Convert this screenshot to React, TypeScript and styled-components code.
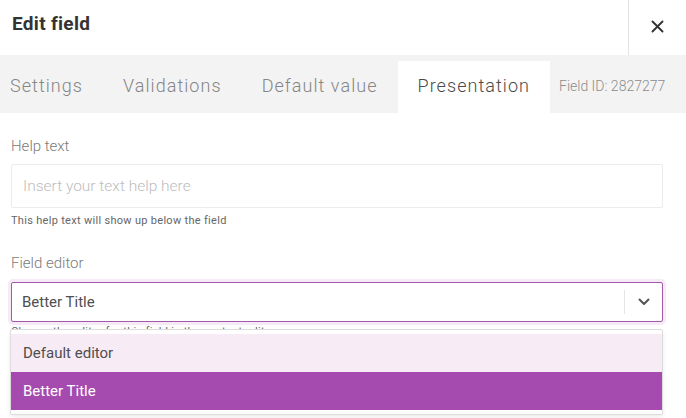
import React from 'react';
import styled, { createGlobalStyle } from 'styled-components';

const GlobalStyle = createGlobalStyle`
  * { box-sizing: border-box; }
  body {
    margin: 0;
    background: #FFFFFF;
    font-family: Roboto, "Liberation Sans", sans-serif;
  }
`;

const Panel = styled.div`
  width: 686px;
  height: 418px;
  display: flex;
  flex-direction: column;
  background: #FFFFFF;
  overflow: hidden;
`;

const Header = styled.header`
  height: 55px;
  display: flex;
  align-items: stretch;
`;

const Title = styled.h1`
  flex: 1;
  margin: 0;
  padding: 13px 0 0 12px;
  font-size: 19px;
  line-height: 22px;
  font-weight: 700;
  letter-spacing: 0.3px;
  color: #333333;
`;

const CloseButton = styled.button`
  width: 58px;
  border: none;
  border-left: 1px solid #E4E4E4;
  background: transparent;
  display: flex;
  align-items: center;
  justify-content: center;
  padding: 0 0 3px;
  cursor: pointer;
`;

const TabBar = styled.nav`
  height: 58px;
  background: #F3F3F3;
  display: flex;
  align-items: flex-end;
`;

const Tab = styled.div<{ $active?: boolean }>`
  height: 52px;
  padding: 14px 20px 0;
  font-size: 18px;
  line-height: 22px;
  font-weight: 300;
  letter-spacing: 1.05px;
  color: ${p => (p.$active ? '#4A4A4A' : '#858585')};
  background: ${p => (p.$active ? '#FFFFFF' : 'transparent')};
  white-space: nowrap;

  &:first-child {
    padding-left: 10px;
  }
`;

const FieldId = styled.div`
  height: 52px;
  padding: 16px 0 0 9px;
  font-size: 14px;
  line-height: 18px;
  font-weight: 300;
  color: #8C8C8C;
  white-space: nowrap;
`;

const Body = styled.div`
  padding: 24px 23px 0 11px;
  display: flex;
  flex-direction: column;
`;

const Label = styled.label`
  display: block;
  font-size: 15px;
  line-height: 18px;
  font-weight: 300;
  color: #7A7A7A;
  margin-bottom: 9px;
`;

const TextInput = styled.input`
  height: 44px;
  width: 100%;
  border: 1px solid #ECECEC;
  border-radius: 2px;
  padding: 0 11px;
  font-family: inherit;
  font-size: 15.5px;
  font-weight: 300;
  color: #555555;
  outline: none;

  &::placeholder {
    color: #BDBDBD;
  }
`;

const Hint = styled.div<{ $gap?: number }>`
  margin-top: ${p => p.$gap ?? 6}px;
  font-size: 11px;
  line-height: 14px;
  letter-spacing: 0.3px;
  color: #666666;
`;

const FieldGroup = styled.div`
  margin-top: 26px;
  position: relative;
`;

const SelectLabel = styled(Label)`
  margin-bottom: 10px;
`;

const SelectWrap = styled.div`
  position: relative;
`;

const SelectControl = styled.div`
  height: 40px;
  border: 1px solid #A05AA8;
  border-radius: 2px;
  box-shadow: 0 0 0 3px #F6EAF6;
  display: flex;
  align-items: center;
  background: #FFFFFF;
`;

const SelectValue = styled.div`
  flex: 1;
  padding-left: 10px;
  font-size: 15px;
  color: #4F4F4F;
`;

const Separator = styled.span`
  width: 1px;
  height: 24px;
  background: #E6E6E6;
`;

const Indicator = styled.div`
  width: 37px;
  display: flex;
  align-items: center;
  justify-content: center;
`;

const Menu = styled.div`
  position: absolute;
  top: 47px;
  left: -1px;
  right: 0;
  padding: 4px 0;
  background: #FFFFFF;
  border: 1px solid #DCDCDC;
  border-radius: 2px;
  box-shadow: 0 2px 4px rgba(0, 0, 0, 0.08);
  z-index: 2;
`;

const Option = styled.div<{ $state: 'hover' | 'selected' }>`
  height: 38px;
  display: flex;
  align-items: center;
  padding-left: 12px;
  font-size: 15px;
  color: ${p => (p.$state === 'selected' ? '#FFFFFF' : '#4F4F4F')};
  background: ${p => (p.$state === 'selected' ? '#A54BAF' : '#F7EBF5')};
`;

const tabs = ['Settings', 'Validations', 'Default value', 'Presentation'];

export default function App() {
  return (
    <>
      <GlobalStyle />
      <Panel>
        <Header>
          <Title>Edit field</Title>
          <CloseButton aria-label="Close">
            <svg width="13" height="13" viewBox="0 0 13 13">
              <path d="M1.5 1.5l10 10M11.5 1.5l-10 10" stroke="#333" strokeWidth="1.9" strokeLinecap="round" />
            </svg>
          </CloseButton>
        </Header>

        <TabBar>
          {tabs.map(t => (
            <Tab key={t} $active={t === 'Presentation'}>{t}</Tab>
          ))}
          <FieldId>Field ID: 2827277</FieldId>
        </TabBar>

        <Body>
          <div>
            <Label>Help text</Label>
            <TextInput placeholder="Insert your text help here" />
            <Hint>This help text will show up below the field</Hint>
          </div>

          <FieldGroup>
            <SelectLabel>Field editor</SelectLabel>
            <SelectWrap>
              <SelectControl>
                <SelectValue>Better Title</SelectValue>
                <Separator />
                <Indicator>
                  <svg width="12" height="8" viewBox="0 0 12 8">
                    <path d="M1.5 1.5L6 6l4.5-4.5" fill="none" stroke="#555" strokeWidth="2" strokeLinecap="round" strokeLinejoin="round" />
                  </svg>
                </Indicator>
              </SelectControl>
              <Hint $gap={3}>Choose the editor for this field in the content editor</Hint>
              <Menu>
                <Option $state="hover">Default editor</Option>
                <Option $state="selected">Better Title</Option>
              </Menu>
            </SelectWrap>
          </FieldGroup>
        </Body>
      </Panel>
    </>
  );
}
